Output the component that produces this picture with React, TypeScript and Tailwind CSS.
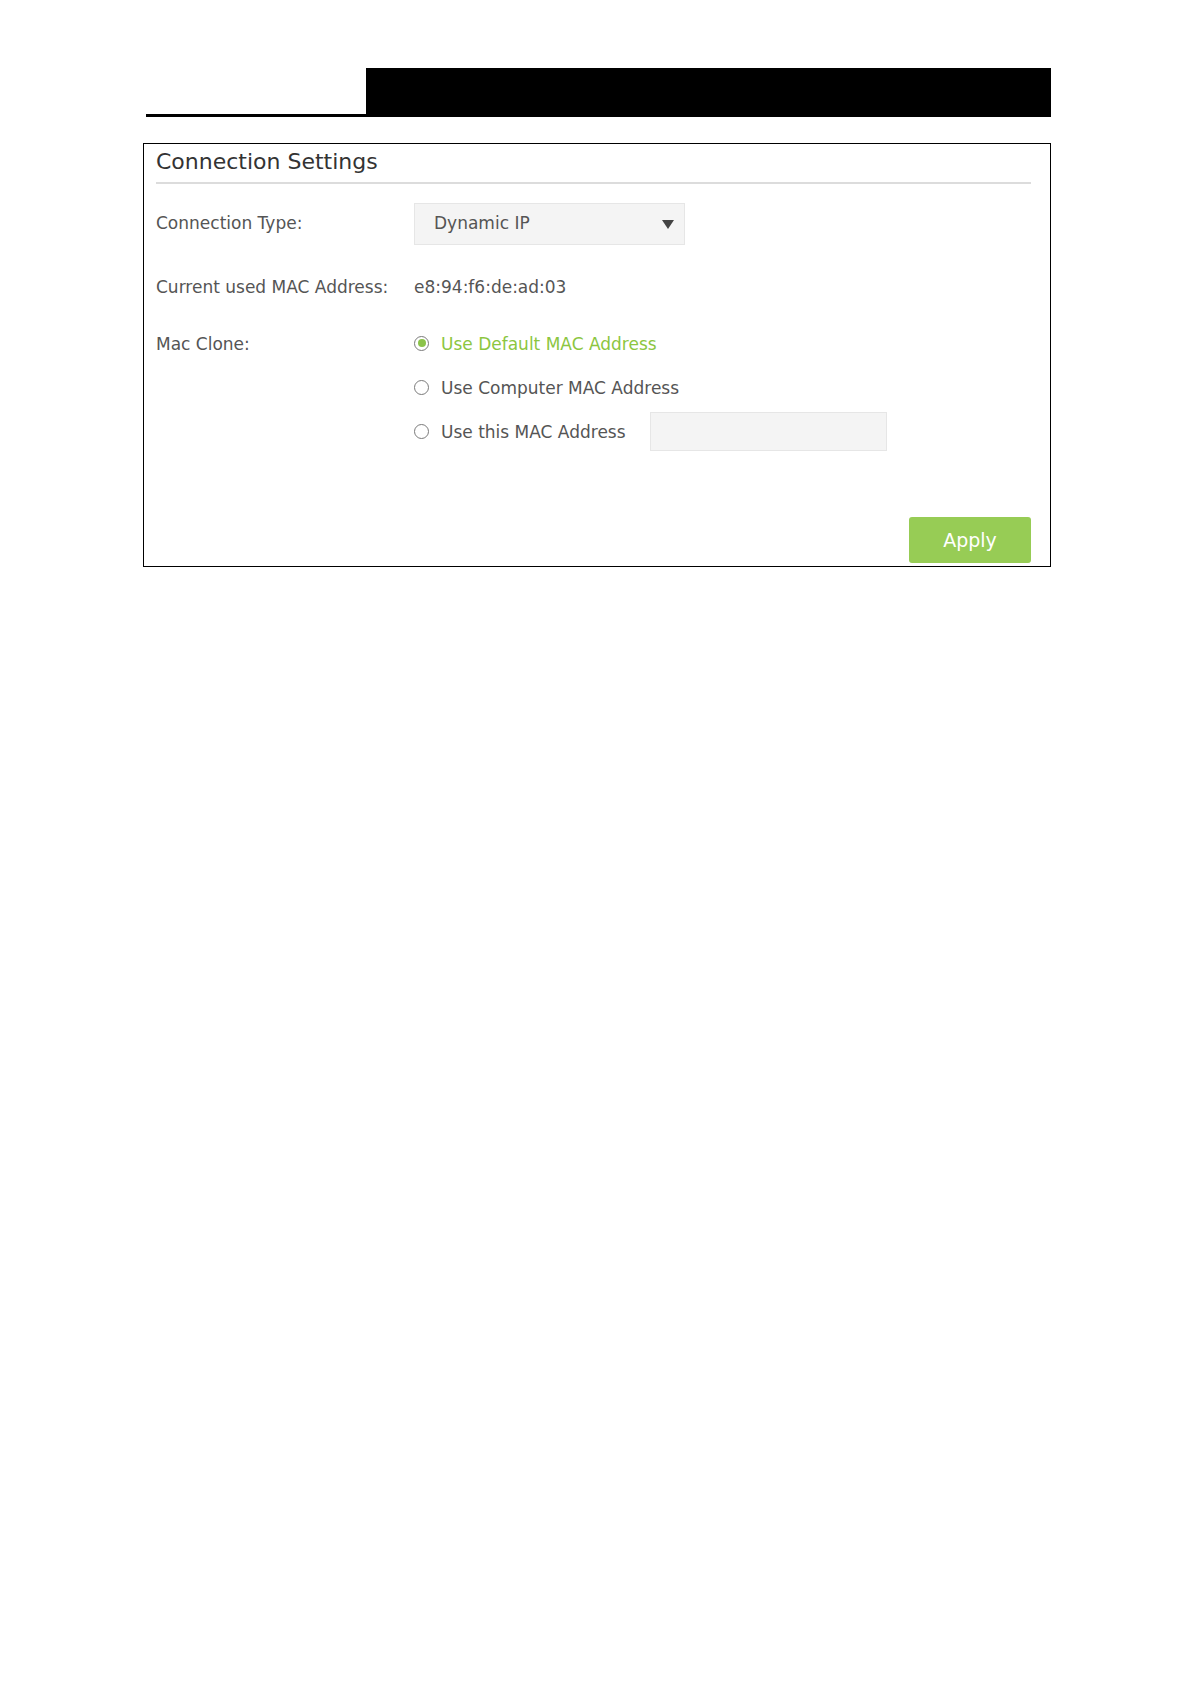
import React from 'react';

const font = { fontFamily: '"DejaVu Sans", Verdana, sans-serif' };

interface RadioProps {
  label: string;
  checked?: boolean;
  children?: React.ReactNode;
}

const Radio: React.FC<RadioProps> = ({ label, checked, children }) => (
  <div className="flex items-center h-[44px]">
    <span className="mb-[4px] w-[15px] h-[15px] rounded-full border border-[#7a7a7a] flex items-center justify-center bg-white">
      {checked && <span className="w-[8px] h-[8px] rounded-full bg-[#8bc34a]" />}
    </span>
    <span className={`ml-[12px] text-[17px] ${checked ? 'text-[#8cc63f]' : 'text-[#555]'}`}>{label}</span>
    {children}
  </div>
);

export default function App() {
  return (
    <div className="min-h-[1685px] bg-white" style={font}>
      <div className="ml-[143px] w-[908px] pt-[68px]">
        {/* page header strip */}
        <div className="flex h-[49px] items-end">
          <div className="ml-[3px] w-[220px] border-b-[3px] border-black" />
          <div className="flex-1 h-full bg-black" />
        </div>

        {/* Connection settings panel */}
        <div className="mt-[26px] h-[424px] border border-black pl-[12px] pr-[19px] flex flex-col">
          <div className="pt-[3px] text-[22px] text-[#333] leading-[30px]">Connection Settings</div>
          <div className="mt-[5px] border-t-2 border-[#dcdcdc]" />

          <div className="mt-[19px] flex items-center h-[42px]">
            <div className="w-[258px] text-[17px] text-[#555]">Connection Type:</div>
            <div className="w-[271px] h-[42px] bg-[#f4f4f4] border border-[#e6e6e6] flex items-center justify-between pl-[19px] pr-[10px]">
              <span className="text-[17px] text-[#555]">Dynamic IP</span>
              <svg width="12" height="9" viewBox="0 0 12 9">
                <path d="M0 0 H12 L6 9 Z" fill="#444" />
              </svg>
            </div>
          </div>

          <div className="mt-[23px] flex items-center h-[40px]">
            <div className="w-[258px] text-[17px] text-[#555]">Current used MAC Address:</div>
            <div className="text-[17px] text-[#555]">e8:94:f6:de:ad:03</div>
          </div>

          <div className="mt-[15px] flex">
            <div className="w-[258px] h-[44px] flex items-center text-[17px] text-[#555]">Mac Clone:</div>
            <div className="flex flex-col">
              <Radio label="Use Default MAC Address" checked />
              <Radio label="Use Computer MAC Address" />
              <Radio label="Use this MAC Address">
                <div className="mb-[4px] ml-[24px] w-[237px] h-[39px] bg-[#f4f4f4] border border-[#e6e6e6]" />
              </Radio>
            </div>
          </div>

          <div className="mt-auto mb-[3px] flex justify-end">
            <button className="w-[122px] h-[46px] rounded-[3px] bg-[#97cc55] text-white text-[19px]">Apply</button>
          </div>
        </div>
      </div>
    </div>
  );
}
